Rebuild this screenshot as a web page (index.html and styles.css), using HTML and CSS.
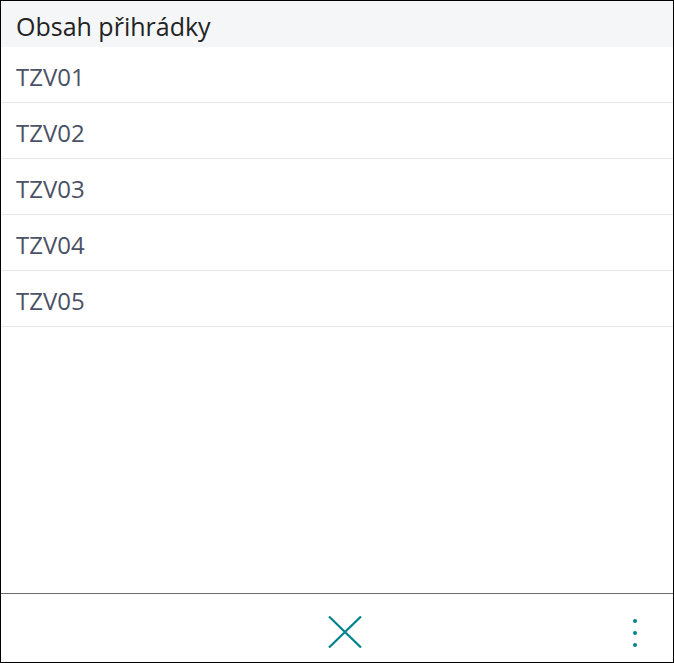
FILE: index.html
```html
<!DOCTYPE html>
<html lang="cs">
<head>
<meta charset="utf-8">
<link rel="stylesheet" href="styles.css">
</head>
<body>
<div class="panel">
  <div class="header">Obsah přihrádky</div>
  <div class="list">
    <div class="row">TZV01</div>
    <div class="row">TZV02</div>
    <div class="row">TZV03</div>
    <div class="row">TZV04</div>
    <div class="row">TZV05</div>
  </div>
  <div class="footer">
    <div class="close">
      <svg width="34" height="32" viewBox="0 0 34 32"><path d="M1 0.5 L33 31.5 M33 0.5 L1 31.5" stroke="#00838a" stroke-width="2.2" fill="none"/></svg>
    </div>
    <div class="more">
      <span class="dot"></span><span class="dot"></span><span class="dot"></span>
    </div>
  </div>
</div>
</body>
</html>
```
FILE: styles.css
```css
html, body { margin: 0; padding: 0; background: #fff; }
.panel {
  width: 674px; height: 663px; box-sizing: border-box;
  border: 1px solid #000;
  display: flex; flex-direction: column;
  font-family: "Open Sans", "Noto Sans", sans-serif;
}
.header {
  height: 46px; box-sizing: border-box; background: #f5f6f8;
  display: flex; align-items: center;
  padding-left: 15px; padding-top: 3px;
  font-size: 25px; color: #222;
}
.list { flex: 1; }
.row {
  height: 56px; box-sizing: border-box; border-bottom: 1px solid #e6e6e6;
  display: flex; align-items: center;
  padding-left: 15px; padding-top: 3px;
  font-size: 24px; color: #4a5263;
}
.footer {
  height: 68px; border-top: 1px solid #6b6b6b;
  position: relative;
  display: flex; align-items: center; justify-content: center;
}
.close { display: flex; margin-left: 16px; margin-top: 8px; }
.more {
  position: absolute; right: 36px; top: 25px;
  display: flex; flex-direction: column; gap: 8px;
}
.dot { width: 4px; height: 4px; border-radius: 50%; background: #00838a; display: block; }
```
